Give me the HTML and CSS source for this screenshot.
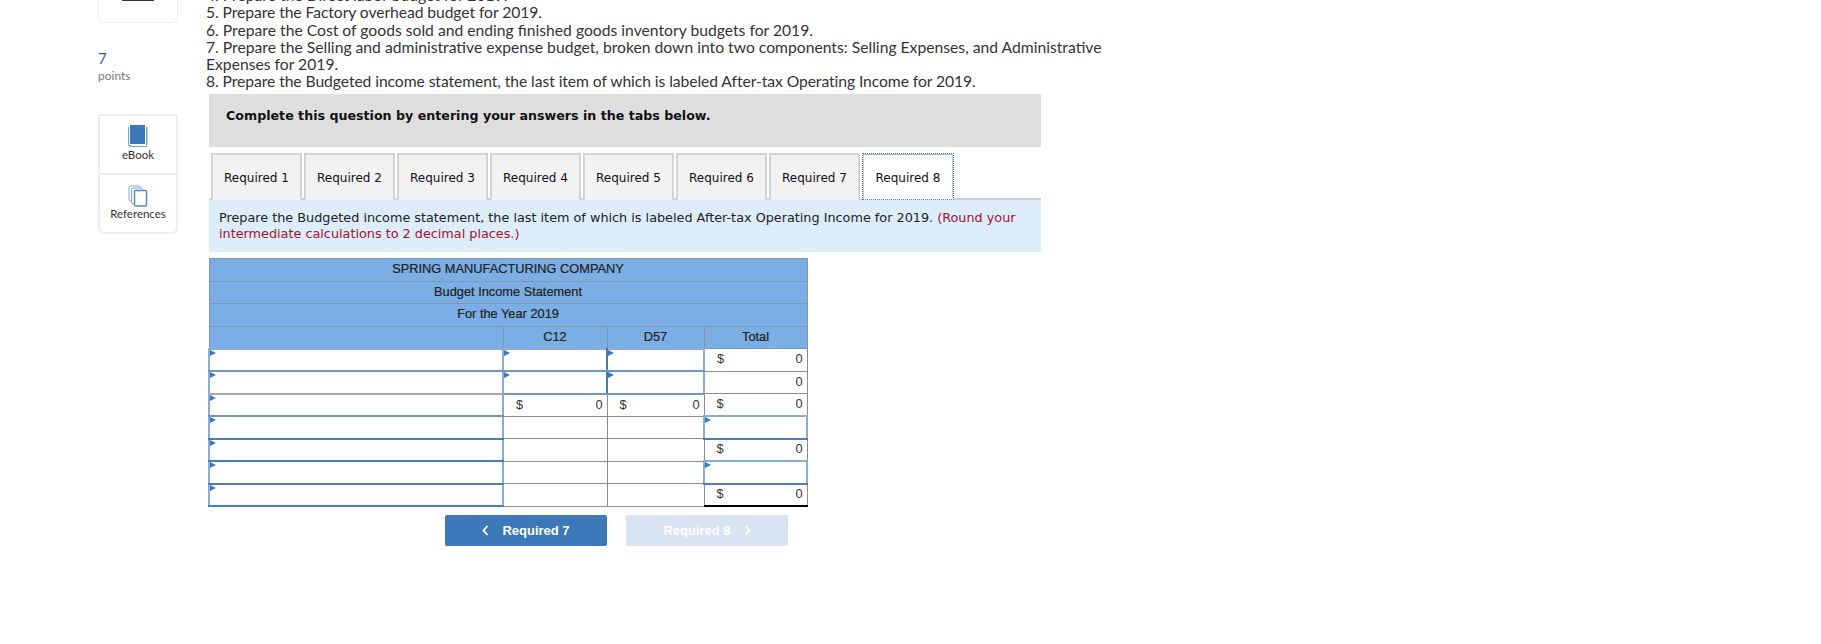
FILE: index.html
```html
<!DOCTYPE html>
<html lang="en">
  <head>
    <meta charset="UTF-8" />
    <meta name="viewport" content="width=device-width, initial-scale=1.0" />
    <title>Budget Income Statement</title>
    <link rel="stylesheet" href="styles.css">
  </head>
  <body>
    <div class="page">
      <!-- Left rail -->
      <aside class="rail">
        <div class="rail-card rail-top"><span class="rail-top-bar"></span></div>
        <div class="points">
          <div class="points-num">7</div>
          <div class="points-label">points</div>
        </div>
        <div class="rail-card rail-tools">
          <div class="tool">
            <svg class="tool-icon" width="22" height="24" viewBox="0 0 22 24">
              <path d="M3 1h15v19H3z" fill="#3d78b8"/>
              <path d="M19 3h1.500v20H4.500c-2 0-3.500-1-3.500-3V3h1v16.500c0 1 .7 1.500 2 1.500h15z" fill="#6fa8dc"/>
              <path d="M4 21.500h16" stroke="#fff" stroke-width="1"/>
            </svg>
            <span>eBook</span>
          </div>
          <div class="tool">
            <svg class="tool-icon" width="20" height="22" viewBox="0 0 20 22">
              <rect x="1" y="1" width="11" height="15" rx="1.500" fill="#fff" stroke="#7fa6d6"/>
              <rect x="3.500" y="3" width="11" height="16" rx="1.500" fill="#fff" stroke="#7fa6d6"/>
              <rect x="6.500" y="5.500" width="12" height="15.500" rx="1" fill="#fff" stroke="#4f8cc9" stroke-width="1.500"/>
            </svg>
            <span>References</span>
          </div>
        </div>
      </aside>

      <!-- Question -->
      <main class="question">
        <div class="steps">
          <p class="step">4. Prepare the Direct labor budget for 2019.</p>
          <p class="step step-tight">5. Prepare the Factory overhead budget for 2019.</p>
          <p class="step step-gap">6. Prepare the Cost of goods sold and ending finished goods inventory budgets for 2019.</p>
          <p class="step">7. Prepare the Selling and administrative expense budget, broken down into two components: Selling Expenses, and Administrative Expenses for 2019.</p>
          <p class="step step-tight">8. Prepare the Budgeted income statement, the last item of which is labeled After-tax Operating Income for 2019.</p>
        </div>

        <div class="complete">Complete this question by entering your answers in the tabs below.</div>

        <div class="tabs">
          <div class="tab">Required 1</div>
          <div class="tab">Required 2</div>
          <div class="tab">Required 3</div>
          <div class="tab">Required 4</div>
          <div class="tab">Required 5</div>
          <div class="tab">Required 6</div>
          <div class="tab">Required 7</div>
          <div class="tab tab-active">Required 8</div>
        </div>

        <div class="instructions">
          Prepare the Budgeted income statement, the last item of which is labeled After-tax Operating Income for 2019.
          <span class="note">(Round your intermediate calculations to 2 decimal places.)</span>
        </div>

        <table class="sheet">
          <colgroup>
            <col class="col-label">
            <col class="col-c12">
            <col class="col-d57">
            <col class="col-total">
          </colgroup>
          <tr class="head"><th colspan="4">SPRING MANUFACTURING COMPANY</th></tr>
          <tr class="head"><th colspan="4">Budget Income Statement</th></tr>
          <tr class="head"><th colspan="4">For the Year 2019</th></tr>
          <tr class="head">
            <th class="head-blank"></th>
            <th>C12</th>
            <th>D57</th>
            <th>Total</th>
          </tr>
          <tr>
            <td class="entry"></td>
            <td class="entry entry-mid"></td>
            <td class="entry"></td>
            <td><div class="amount"><span>$</span><span>0</span></div></td>
          </tr>
          <tr>
            <td class="entry entry-grey"></td>
            <td class="entry entry-mid"></td>
            <td class="entry"></td>
            <td><div class="amount"><span></span><span>0</span></div></td>
          </tr>
          <tr>
            <td class="entry"></td>
            <td><div class="amount"><span>$</span><span>0</span></div></td>
            <td><div class="amount"><span>$</span><span>0</span></div></td>
            <td><div class="amount"><span>$</span><span>0</span></div></td>
          </tr>
          <tr>
            <td class="entry entry-dark"></td>
            <td></td>
            <td></td>
            <td class="entry entry-dark"></td>
          </tr>
          <tr>
            <td class="entry entry-dark"></td>
            <td></td>
            <td></td>
            <td><div class="amount"><span>$</span><span>0</span></div></td>
          </tr>
          <tr>
            <td class="entry entry-dark"></td>
            <td></td>
            <td></td>
            <td class="entry entry-dark"></td>
          </tr>
          <tr>
            <td class="entry entry-dark"></td>
            <td></td>
            <td></td>
            <td class="grand"><div class="amount"><span>$</span><span>0</span></div></td>
          </tr>
        </table>

        <div class="pager">
          <button class="pager-btn" type="button">
            <svg width="7" height="11" viewBox="0 0 7 11"><path d="M5.500 1L1.500 5.500l4 4.500" fill="none" stroke="#fff" stroke-width="1.800"/></svg>
            Required 7
          </button>
          <button class="pager-btn pager-off" type="button">
            Required 8
            <svg width="7" height="11" viewBox="0 0 7 11"><path d="M1.500 1l4 4.500-4 4.500" fill="none" stroke="#fff" stroke-width="1.800"/></svg>
          </button>
        </div>
      </main>
    </div>
  </body>
</html>
```

FILE: styles.css
```css
* {
  margin: 0;
  padding: 0;
  box-sizing: border-box;
}

body {
  background-color: #fff;
  color: #222;
  height: 644px;
  overflow: hidden;
  font-family: 'Lato', 'Liberation Sans', sans-serif;
}

.page {
  display: flex;
  padding-left: 98px;
  height: 100%;
  overflow: hidden;
}

/* Left rail */
.rail {
  width: 80px;
  flex: none;
}

.rail-card {
  border: 1px solid #eee;
  border-radius: 0 0 6px 6px;
}

.rail-top {
  height: 24px;
  margin-top: -1px;
  border-top: 0;
  display: flex;
  justify-content: center;
}

.rail-top-bar {
  width: 32px;
  height: 2px;
  background-color: #333;
}

.points {
  margin-top: 27px;
}

.points-num {
  color: #2a5d9c;
  font-size: 15px;
  line-height: 17px;
}

.points-label {
  color: #777;
  font-size: 12px;
  line-height: 18px;
}

.rail-tools {
  margin-top: 29px;
  border-top: 2px solid #eee;
  border-width: 2px;
}

.tool {
  height: 57px;
  display: flex;
  flex-direction: column;
  align-items: center;
  padding-top: 8px;
  font-size: 11.500px;
  line-height: 14px;
  color: #333;
}

.tool + .tool {
  height: 59px;
  border-top: 2px solid #eee;
  padding-top: 10px;
}

/* Question */
.question {
  flex: none;
  width: 845px;
  margin-left: 28px;
  margin-top: -13px;
}

.steps {
  width: 930px;
}

.step {
  font-size: 15.700px;
  line-height: 17px;
  color: #333;
  width: 930px;
}

.step-tight {
  letter-spacing: -0.080px;
}

.step-gap {
  margin-top: 1px;
}

.complete {
  margin: 4px 0 6px 3px;
  width: 832px;
  height: 53px;
  background-color: #dedede;
  padding: 14px 0 0 17px;
  font-family: 'DejaVu Sans', sans-serif;
  font-size: 12.650px;
  font-weight: bold;
  color: #111;
  line-height: 16px;
}

.tabs {
  margin-left: 3px;
  width: 832px;
  height: 47px;
  padding-left: 2px;
  display: flex;
  gap: 2px;
  border-bottom: 2px solid #cfcfcf;
}

.tab {
  width: 91px;
  height: 47px;
  background-color: #f2f2f2;
  border: 2px solid #d4d4d4;
  border-bottom: 0;
  font-family: 'DejaVu Sans', sans-serif;
  font-size: 12px;
  color: #111;
  display: flex;
  align-items: center;
  justify-content: center;
}

.tab-active {
  width: 92px;
  padding-top: 2px;
  background-color: #fff;
  border: 1px dotted #3d78b8;
  box-shadow: inset 0 1px 0 #bbb, inset 1px 0 0 #ccc, inset -1px 0 0 #ccc;
}

.instructions {
  margin-left: 3px;
  width: 832px;
  height: 52px;
  background-color: #dcecf9;
  padding: 10px 14px 0 10px;
  font-family: 'DejaVu Sans', sans-serif;
  font-size: 12.800px;
  line-height: 16px;
  color: #222;
}

.note {
  color: #a3142e;
}

/* Statement table */
.sheet {
  margin: 6px 0 0 2px;
  width: 598px;
  table-layout: fixed;
  border-collapse: collapse;
  font-family: 'Liberation Sans', sans-serif;
  font-size: 12.800px;
  color: #222;
}

.col-label {
  width: 294px;
}

.col-c12 {
  width: 104px;
}

.col-d57 {
  width: 97px;
}

.col-total {
  width: 103px;
}

.sheet tr {
  height: 22.500px;
}

.sheet th,
.sheet td {
  border: 1px solid #8c8c8c;
  padding: 0;
}

.sheet th {
  background-color: #7aaee4;
  border-color: #7f97ad;
  font-weight: normal;
  padding-bottom: 2px;
  -webkit-text-stroke: 0.200px #222;
}

.head th {
  border-width: 1.500px;
}

.sheet .entry {
  position: relative;
  border: 2px solid #8aacd6;
  border-bottom-color: #6f97c6;
}

.sheet .entry::before {
  content: "";
  position: absolute;
  left: 0;
  top: 0;
  border-left: 6px solid #3d78b8;
  border-top: 3px solid transparent;
  border-bottom: 3px solid transparent;
}

.sheet .entry-mid {
  border-right-color: #4f77a8;
}

.sheet .entry-grey {
  border-bottom-color: #a5a9ae;
}

.sheet .entry-dark {
  border-bottom-color: #4a7fb5;
}

.grand {
  border-bottom: 2px solid #000 !important;
}

.amount {
  display: flex;
  justify-content: space-between;
  padding: 0 4px 2px 12px;
  color: #333;
}

/* Prev and next */
.pager {
  margin: 8px 0 0 239px;
  display: flex;
  gap: 19px;
}

.pager-btn {
  width: 162px;
  height: 31px;
  background-color: #3d78b8;
  border: none;
  border-radius: 2px;
  color: #fff;
  font-family: 'Liberation Sans', sans-serif;
  font-size: 13px;
  font-weight: bold;
  display: flex;
  align-items: center;
  justify-content: center;
  gap: 13px;
}

.pager-off {
  background-color: #d9e4f2;
}
```
